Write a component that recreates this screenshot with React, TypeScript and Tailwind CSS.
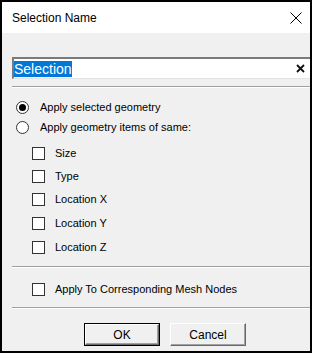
import React from "react";

const font = { fontFamily: '"Liberation Sans", Arial, sans-serif' };

function Sep() {
  return <div className="ml-[10px] h-[2px] border-t border-[#a0a0a0] border-b border-b-white" />;
}

function Check({ label, h }: { label: string; h: string }) {
  return (
    <div className={`flex items-center pl-[30px] ${h}`}>
      <div className="w-[13px] h-[13px] border border-[#333333] bg-white" />
      <span className="ml-[10px] text-[11px] text-black">{label}</span>
    </div>
  );
}

function Radio({ label, checked }: { label: string; checked?: boolean }) {
  return (
    <div className="flex items-center pl-[14px] h-[20px]">
      <div className="w-[13px] h-[13px] rounded-full border border-[#333333] bg-white flex items-center justify-center">
        {checked && <div className="w-[7px] h-[7px] rounded-full bg-black" />}
      </div>
      <span className="ml-[11px] text-[11px] text-black">{label}</span>
    </div>
  );
}

export default function App() {
  return (
    <div className="w-[314px] h-[356px] bg-white" style={font}>
      <div className="w-[312px] h-[353px] border-2 border-black bg-[#f0f0f0] flex flex-col">
        <div className="h-[31px] bg-white flex items-center justify-between pl-[10px] pr-[8px]">
          <span className="text-[12px] text-black">Selection Name</span>
          <svg width="12" height="12" viewBox="0 0 12 12">
            <path d="M0.5 0.5 L11.5 11.5 M11.5 0.5 L0.5 11.5" stroke="#000" strokeWidth="1" />
          </svg>
        </div>
        <div className="mt-[24px] ml-[10px] h-[22px] bg-white border-t-2 border-l-2 border-[#7a7a7a] border-b border-b-[#e3e3e3] flex items-start justify-between">
          <span className="mt-[2px] text-[14px] leading-[16px] bg-[#0078d7] text-white">Selection</span>
          <svg width="9" height="9" viewBox="0 0 9 9" className="mt-[5px] mr-[5px]">
            <path d="M1 1 L8 8 M8 1 L1 8" stroke="#111" strokeWidth="1.8" />
          </svg>
        </div>
        <div className="mt-[7px]"><Sep /></div>
        <div className="mt-[9px]">
          <Radio label="Apply selected geometry" checked />
          <Radio label="Apply geometry items of same:" />
        </div>
        <div className="mt-[5px]">
          <Check label="Size" h="h-[23px]" />
          <Check label="Type" h="h-[23px]" />
          <Check label="Location X" h="h-[23px]" />
          <Check label="Location Y" h="h-[24px]" />
          <Check label="Location Z" h="h-[24px]" />
        </div>
        <div className="mt-[7px]"><Sep /></div>
        <div className="mt-[11px]">
          <Check label="Apply To Corresponding Mesh Nodes" h="h-[20px]" />
        </div>
        <div className="mt-[8px]"><Sep /></div>
        <div className="mt-[14px] flex pl-[82px] gap-[10px]">
          <div className="w-[76px] h-[23px] border border-black">
            <div className="w-full h-full border-t border-l border-white border-b border-r border-b-[#696969] border-r-[#696969] bg-[#f0f0f0] shadow-[inset_-1px_-1px_#a0a0a0] flex items-center justify-center text-[12px] text-black">OK</div>
          </div>
          <div className="w-[76px] h-[23px] border-t border-l border-white border-b border-r border-b-[#696969] border-r-[#696969] bg-[#f0f0f0] shadow-[inset_-1px_-1px_#a0a0a0] flex items-center justify-center text-[12px] text-black">Cancel</div>
        </div>
      </div>
    </div>
  );
}
